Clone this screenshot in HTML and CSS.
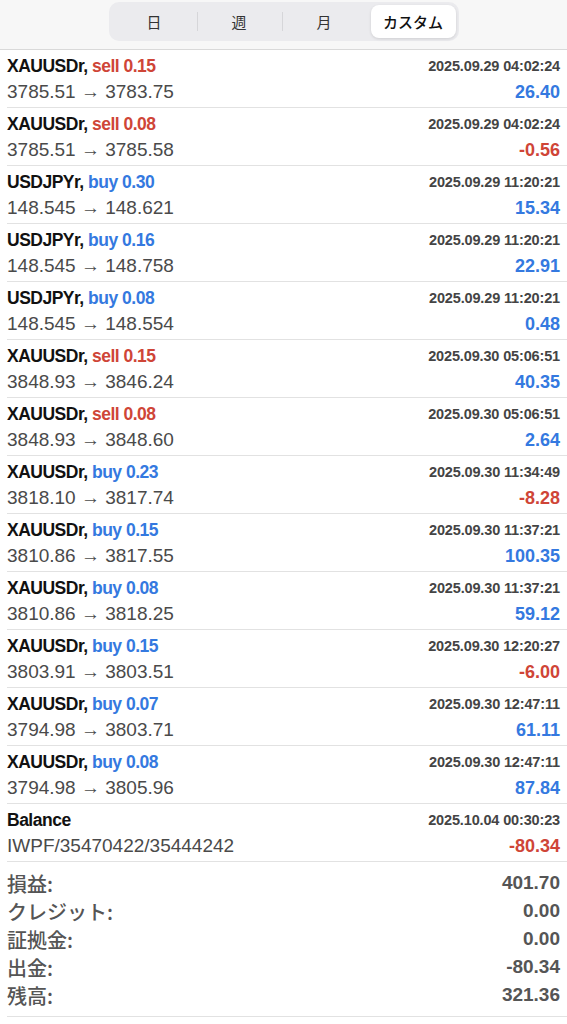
FILE: index.html
```html
<!DOCTYPE html>
<html lang="ja">
<head>
  <meta charset="UTF-8">
  <meta name="viewport" content="width=device-width, initial-scale=1.0">
  <title>履歴</title>
  <link rel="stylesheet" href="styles.css">
</head>
<body>

  <header class="topbar">
    <div class="segments">
      <div class="seg">日</div>
      <div class="seg">週</div>
      <div class="seg">月</div>
      <div class="seg active">カスタム</div>
    </div>
  </header>

  <div class="list">
    <div class="trade">
      <div class="line">
        <span class="title">XAUUSDr, <span class="sell">sell 0.15</span></span>
        <span class="date">2025.09.29 04:02:24</span>
      </div>
      <div class="line second">
        <span class="price">3785.51 → 3783.75</span>
        <span class="value plus">26.40</span>
      </div>
    </div>

    <div class="trade">
      <div class="line">
        <span class="title">XAUUSDr, <span class="sell">sell 0.08</span></span>
        <span class="date">2025.09.29 04:02:24</span>
      </div>
      <div class="line second">
        <span class="price">3785.51 → 3785.58</span>
        <span class="value minus">-0.56</span>
      </div>
    </div>

    <div class="trade">
      <div class="line">
        <span class="title">USDJPYr, <span class="buy">buy 0.30</span></span>
        <span class="date">2025.09.29 11:20:21</span>
      </div>
      <div class="line second">
        <span class="price">148.545 → 148.621</span>
        <span class="value plus">15.34</span>
      </div>
    </div>

    <div class="trade">
      <div class="line">
        <span class="title">USDJPYr, <span class="buy">buy 0.16</span></span>
        <span class="date">2025.09.29 11:20:21</span>
      </div>
      <div class="line second">
        <span class="price">148.545 → 148.758</span>
        <span class="value plus">22.91</span>
      </div>
    </div>

    <div class="trade">
      <div class="line">
        <span class="title">USDJPYr, <span class="buy">buy 0.08</span></span>
        <span class="date">2025.09.29 11:20:21</span>
      </div>
      <div class="line second">
        <span class="price">148.545 → 148.554</span>
        <span class="value plus">0.48</span>
      </div>
    </div>

    <div class="trade">
      <div class="line">
        <span class="title">XAUUSDr, <span class="sell">sell 0.15</span></span>
        <span class="date">2025.09.30 05:06:51</span>
      </div>
      <div class="line second">
        <span class="price">3848.93 → 3846.24</span>
        <span class="value plus">40.35</span>
      </div>
    </div>

    <div class="trade">
      <div class="line">
        <span class="title">XAUUSDr, <span class="sell">sell 0.08</span></span>
        <span class="date">2025.09.30 05:06:51</span>
      </div>
      <div class="line second">
        <span class="price">3848.93 → 3848.60</span>
        <span class="value plus">2.64</span>
      </div>
    </div>

    <div class="trade">
      <div class="line">
        <span class="title">XAUUSDr, <span class="buy">buy 0.23</span></span>
        <span class="date">2025.09.30 11:34:49</span>
      </div>
      <div class="line second">
        <span class="price">3818.10 → 3817.74</span>
        <span class="value minus">-8.28</span>
      </div>
    </div>

    <div class="trade">
      <div class="line">
        <span class="title">XAUUSDr, <span class="buy">buy 0.15</span></span>
        <span class="date">2025.09.30 11:37:21</span>
      </div>
      <div class="line second">
        <span class="price">3810.86 → 3817.55</span>
        <span class="value plus">100.35</span>
      </div>
    </div>

    <div class="trade">
      <div class="line">
        <span class="title">XAUUSDr, <span class="buy">buy 0.08</span></span>
        <span class="date">2025.09.30 11:37:21</span>
      </div>
      <div class="line second">
        <span class="price">3810.86 → 3818.25</span>
        <span class="value plus">59.12</span>
      </div>
    </div>

    <div class="trade">
      <div class="line">
        <span class="title">XAUUSDr, <span class="buy">buy 0.15</span></span>
        <span class="date">2025.09.30 12:20:27</span>
      </div>
      <div class="line second">
        <span class="price">3803.91 → 3803.51</span>
        <span class="value minus">-6.00</span>
      </div>
    </div>

    <div class="trade">
      <div class="line">
        <span class="title">XAUUSDr, <span class="buy">buy 0.07</span></span>
        <span class="date">2025.09.30 12:47:11</span>
      </div>
      <div class="line second">
        <span class="price">3794.98 → 3803.71</span>
        <span class="value plus">61.11</span>
      </div>
    </div>

    <div class="trade">
      <div class="line">
        <span class="title">XAUUSDr, <span class="buy">buy 0.08</span></span>
        <span class="date">2025.09.30 12:47:11</span>
      </div>
      <div class="line second">
        <span class="price">3794.98 → 3805.96</span>
        <span class="value plus">87.84</span>
      </div>
    </div>

    <div class="trade">
      <div class="line">
        <span class="title">Balance</span>
        <span class="date">2025.10.04 00:30:23</span>
      </div>
      <div class="line second">
        <span class="price">IWPF/35470422/35444242</span>
        <span class="value minus">-80.34</span>
      </div>
    </div>
  </div>

  <div class="summary">
    <div class="sum-row"><span class="label">損益:</span><span class="amount">401.70</span></div>
    <div class="sum-row"><span class="label">クレジット:</span><span class="amount">0.00</span></div>
    <div class="sum-row"><span class="label">証拠金:</span><span class="amount">0.00</span></div>
    <div class="sum-row"><span class="label">出金:</span><span class="amount">-80.34</span></div>
    <div class="sum-row"><span class="label">残高:</span><span class="amount">321.36</span></div>
  </div>

</body>
</html>
```

FILE: styles.css
```css
body {
  margin: 0;
  padding: 0;
  background-color: #fff;
  font-family: "Liberation Sans", Arial, "Noto Sans CJK JP", sans-serif;
  color: #111;
}

/* top segmented control */
.topbar {
  height: 49px;
  background-color: #f7f7f7;
  border-bottom: 1px solid #d9d9d9;
  display: flex;
  justify-content: center;
  align-items: flex-start;
}

.segments {
  margin-top: 2px;
  width: 350px;
  height: 39px;
  box-sizing: border-box;
  padding: 3px;
  background-color: #ebebee;
  border-radius: 10px;
  display: flex;
}

.seg {
  flex: 1;
  display: flex;
  align-items: center;
  justify-content: center;
  font-family: "Noto Sans CJK JP", sans-serif;
  font-size: 15px;
  color: #333;
  position: relative;
}

.seg + .seg::before {
  content: "";
  position: absolute;
  left: 0;
  top: 7px;
  bottom: 7px;
  width: 1px;
  background-color: #d6d6d9;
}

.seg.active {
  margin-left: 4px;
  background-color: #fff;
  border-radius: 8px;
  color: #111;
  font-weight: 500;
  box-shadow: 0 1px 3px rgba(0, 0, 0, 0.12);
}

.seg.active::before {
  display: none;
}

/* trades */
.trade {
  margin-left: 7px;
  padding: 4px 7px 1px 0;
  border-bottom: 1px solid #e2e2e2;
  box-sizing: border-box;
  height: 58px;
}

.line {
  display: flex;
  justify-content: space-between;
  align-items: center;
  height: 24px;
}

.line.second {
  margin-top: 1px;
  height: 26px;
}

.title {
  font-size: 17.5px;
  font-weight: bold;
  letter-spacing: -0.5px;
  color: #111;
}

.sell {
  color: #cf4537;
}

.buy {
  color: #3479e0;
}

.date {
  font-family: "Liberation Sans Narrow", "Liberation Sans", sans-serif;
  font-size: 14.5px;
  font-weight: bold;
  letter-spacing: -0.15px;
  color: #444;
}

.price {
  font-size: 19px;
  color: #4a4a4a;
}

.value {
  font-size: 18px;
  font-weight: bold;
}

.value.plus {
  color: #3479e0;
}

.value.minus {
  color: #cf4537;
}

/* totals */
.summary {
  margin-left: 7px;
  padding: 7px 7px 7px 0;
  border-bottom: 1px solid #e2e2e2;
}

.sum-row {
  display: flex;
  justify-content: space-between;
  align-items: center;
  height: 28px;
  color: #555;
}

.label {
  font-family: "Noto Sans CJK JP", sans-serif;
  font-size: 20px;
  font-weight: 500;
}

.amount {
  font-size: 19px;
  font-weight: bold;
}
```
